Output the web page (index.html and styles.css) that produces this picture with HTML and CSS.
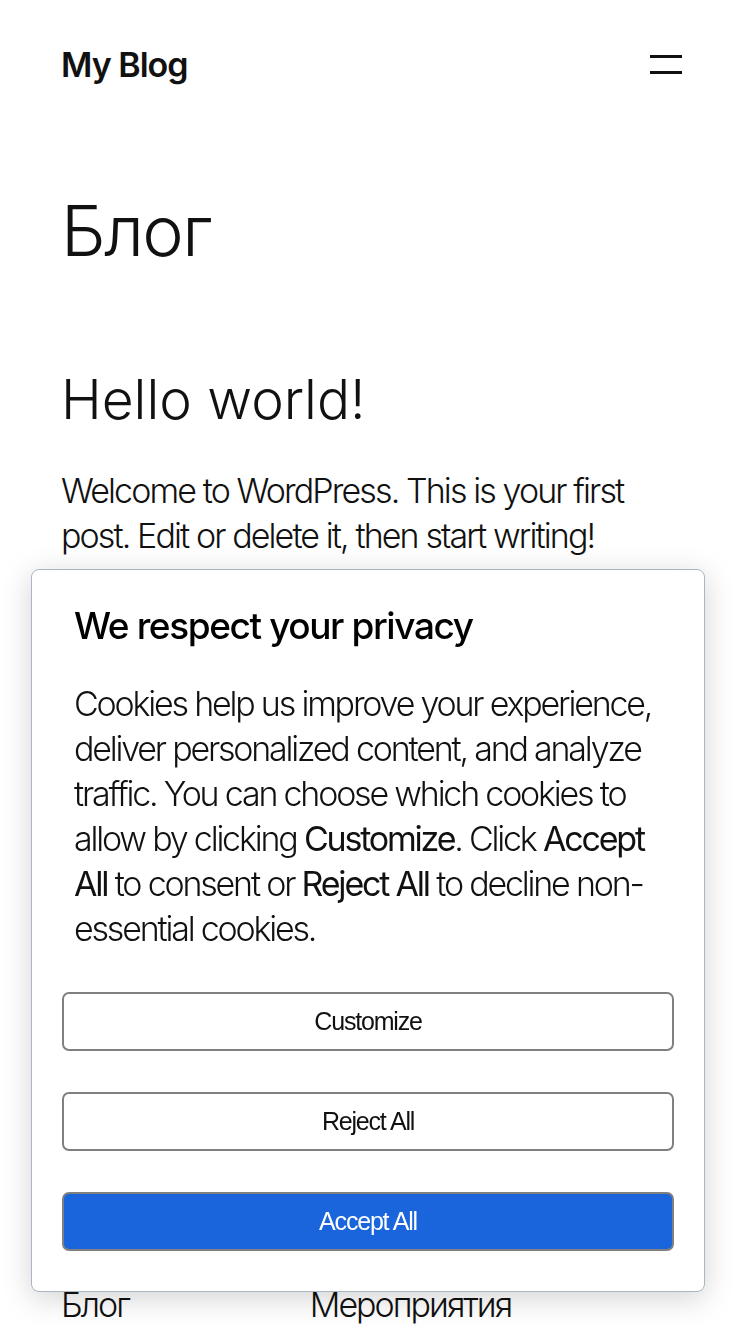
FILE: index.html
```html
<!DOCTYPE html>
<html lang="ru">
<head>
  <meta charset="UTF-8" />
  <title>Блог – My Blog</title>
  <link rel="stylesheet" href="styles.css">
</head>
<body>

  <!-- Header -->
  <header class="site-header">
    <a class="site-title" href="#">My Blog</a>
    <button class="menu-toggle" aria-label="Open menu">
      <span></span>
      <span></span>
    </button>
  </header>

  <!-- Posts -->
  <main class="site-main">
    <h1 class="page-title">Блог</h1>

    <article class="post">
      <h2 class="post-title">Hello world!</h2>
      <p class="post-excerpt">Welcome to WordPress. This is your first post. Edit or delete it, then start writing!</p>
    </article>
  </main>

  <footer class="site-footer">
    <a href="#">Блог</a>
    <a href="#">Мероприятия</a>
  </footer>

  <!-- Cookie consent -->
  <div class="consent" role="dialog" aria-label="Cookie consent">
    <h2 class="consent-title">We respect your privacy</h2>
    <p class="consent-text">Cookies help us improve your experience, deliver personalized content, and analyze traffic. You can choose which cookies to allow by clicking <b>Customize</b>. Click <b>Accept</b> <b>All</b> to consent or <b>Reject All</b> to decline non-essential cookies.</p>
    <div class="consent-buttons">
      <button class="consent-btn">Customize</button>
      <button class="consent-btn">Reject All</button>
      <button class="consent-btn primary">Accept All</button>
    </div>
  </div>

</body>
</html>
```

FILE: styles.css
```css
body {
  margin: 0;
  padding: 0;
  font-family: Inter, "Noto Sans", sans-serif;
  font-weight: 300;
  color: #111;
  background: #fff;
  min-height: 1334px;
}

a {
  color: inherit;
  text-decoration: none;
}

.site-header {
  display: flex;
  justify-content: space-between;
  align-items: center;
  padding: 42px 68px 0 61px;
  height: 44px;
}

.site-title {
  font-weight: 600;
  font-size: 34px;
  letter-spacing: -1px;
}

.menu-toggle {
  display: flex;
  flex-direction: column;
  gap: 13px;
  width: 32px;
  padding: 0;
  background: none;
  border: none;
}

.menu-toggle span {
  display: block;
  height: 3px;
  background: #111;
}

.site-main {
  padding: 0 61px;
}

.page-title {
  margin: 97px 0 0;
  font-size: 70px;
  font-weight: 300;
  line-height: 96px;
  letter-spacing: -1.6px;
}

.post-title {
  margin: 87px 0 0;
  font-size: 55px;
  font-weight: 300;
  line-height: 66px;
  letter-spacing: 0;
}

.post-excerpt {
  margin: 36px 0 0;
  font-size: 34px;
  line-height: 45px;
  letter-spacing: -1.9px;
}

.site-footer {
  display: flex;
  gap: 181px;
  padding: 0 61px;
  margin-top: 724px;
  font-size: 34px;
  letter-spacing: -2px;
  line-height: 45px;
}

.consent {
  position: fixed;
  left: 31px;
  top: 569px;
  width: 674px;
  height: 723px;
  box-sizing: border-box;
  padding: 30px 30px 40px;
  background: #fff;
  border: 1px solid #aab6c4;
  border-radius: 8px;
  box-shadow: 0 6px 30px rgba(0, 0, 0, 0.18);
}

.consent-title {
  margin: 0 12px;
  font-size: 37px;
  font-weight: 500;
  line-height: 52px;
  letter-spacing: -1.4px;
  color: #000;
}

.consent-text {
  margin: 29px 12px 0;
  font-size: 34px;
  line-height: 45px;
  letter-spacing: -2.2px;
}

.consent-text b {
  font-weight: 400;
}

.consent-buttons {
  display: flex;
  flex-direction: column;
  gap: 41px;
  margin-top: 41px;
}

.consent-btn {
  height: 59px;
  background: #fff;
  border: 2px solid #808080;
  border-radius: 7px;
  font-family: "Liberation Sans", Arial, sans-serif;
  font-size: 25px;
  letter-spacing: -1.2px;
  color: #111;
}

.consent-btn.primary {
  background: #1a65db;
  color: #fff;
}
```
